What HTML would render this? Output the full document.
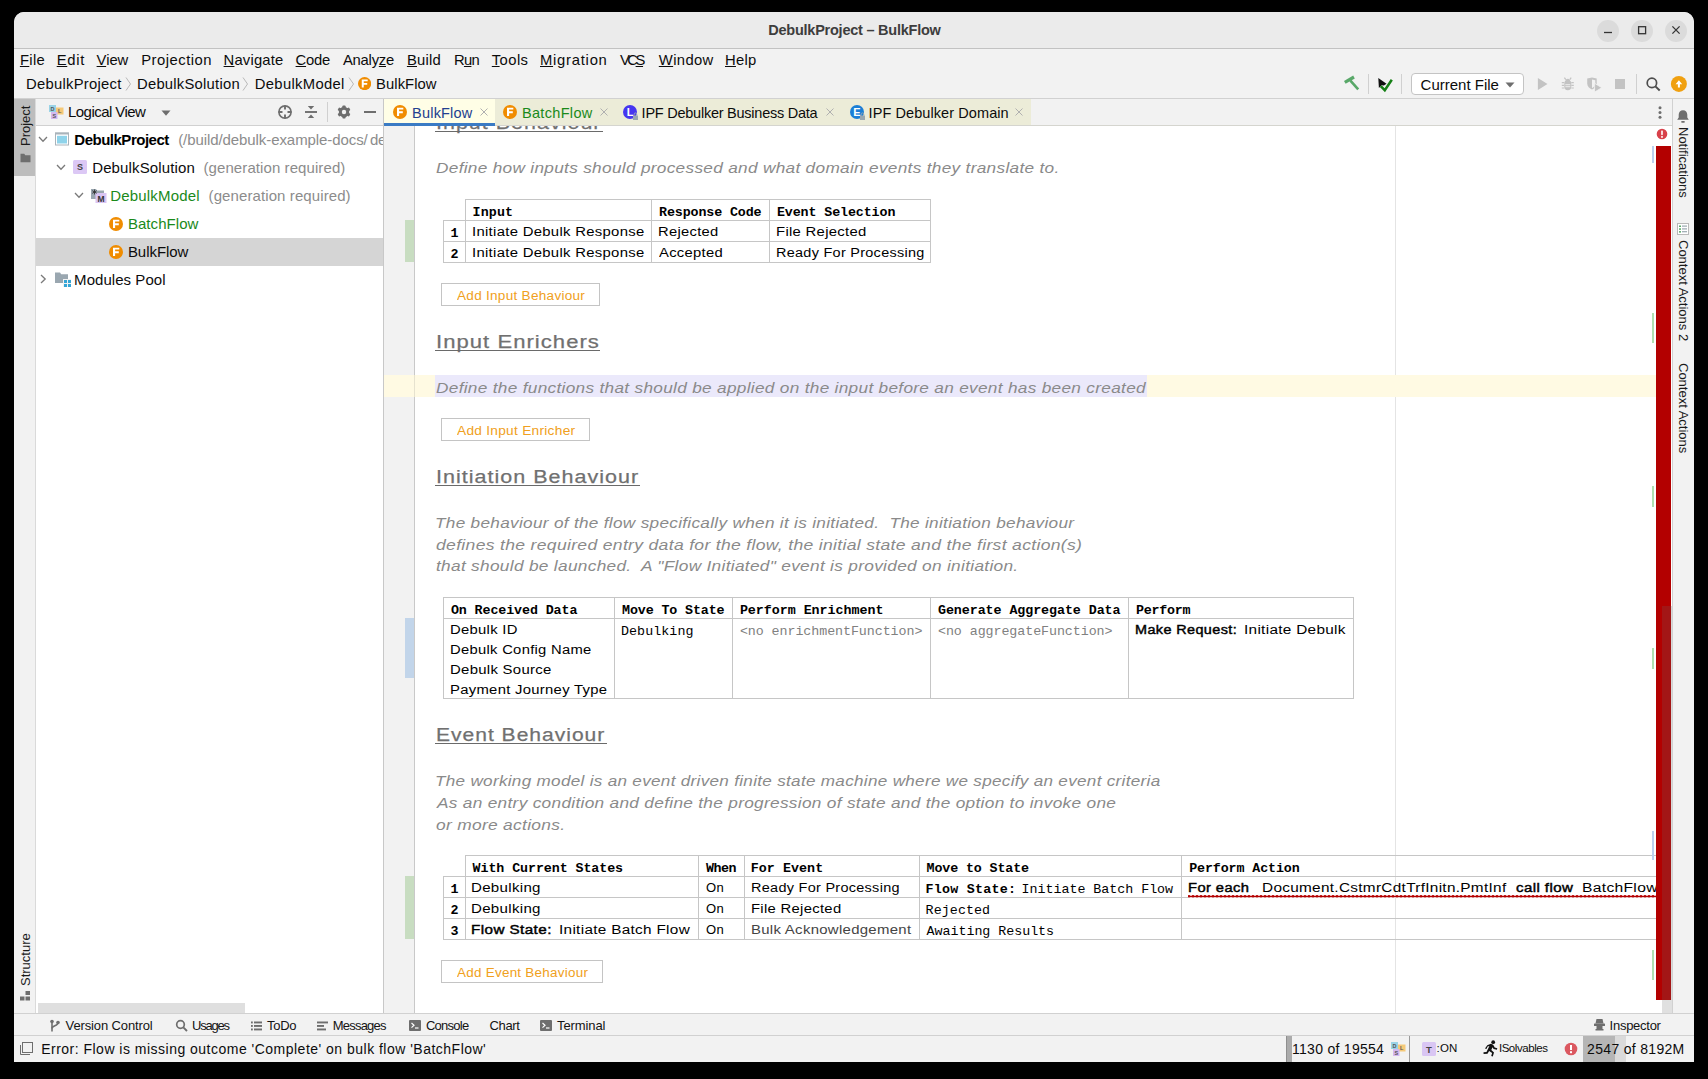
<!DOCTYPE html>
<html><head><meta charset="utf-8"><title>DebulkProject - BulkFlow</title>
<style>
html,body{margin:0;padding:0;background:#000;}
body{width:1708px;height:1079px;position:relative;overflow:hidden;font-family:"Liberation Sans",sans-serif;}
div,span.t,svg{position:absolute;}
span.t{white-space:pre;display:block;}
u{text-decoration:underline;text-underline-offset:1px;}
.clip{overflow:hidden;}
</style></head><body>
<div style="left:14px;top:12px;width:1680px;height:1050px;background:#f2f2f2;border-radius:10px 10px 0 0;"></div>
<div style="left:14px;top:12px;width:1680px;height:36px;background:#ebebeb;border-radius:10px 10px 0 0;"></div>
<div style="left:14px;top:48px;width:1680px;height:1px;background:#c2c2c2;"></div>
<span class="t" style="left:768.20px;top:22.85px;font:bold 14.5px/14.5px 'Liberation Sans', sans-serif;letter-spacing:-0.234px;color:#3d3d3d;">DebulkProject – BulkFlow</span>
<div style="left:1597px;top:19.5px;width:22px;height:22px;border-radius:11px;background:#dbdbdb"></div>
<div style="left:1631px;top:19.5px;width:22px;height:22px;border-radius:11px;background:#dbdbdb"></div>
<div style="left:1665px;top:19.5px;width:22px;height:22px;border-radius:11px;background:#dbdbdb"></div>
<svg style="left:1597px;top:19px" width="90" height="24" viewBox="0 0 90 24"><g stroke="#333" stroke-width="1.300" fill="none"><path d="M7 13.500h8"/><rect x="41.600" y="7.700" width="7" height="7"/><path d="M75.400 7.400l7.200 7.200M82.600 7.400l-7.200 7.200"/></g></svg>
<span class="t" style="left:19.90px;top:52.80px;font:14.8px/14.8px 'Liberation Sans', sans-serif;letter-spacing:0.362px;color:#0c0c0c;"><u>F</u>ile</span>
<span class="t" style="left:56.70px;top:52.80px;font:14.8px/14.8px 'Liberation Sans', sans-serif;letter-spacing:0.705px;color:#0c0c0c;"><u>E</u>dit</span>
<span class="t" style="left:96.60px;top:52.80px;font:14.8px/14.8px 'Liberation Sans', sans-serif;letter-spacing:-0.040px;color:#0c0c0c;"><u>V</u>iew</span>
<span class="t" style="left:141.20px;top:52.80px;font:14.8px/14.8px 'Liberation Sans', sans-serif;letter-spacing:0.503px;color:#0c0c0c;">Projection</span>
<span class="t" style="left:223.60px;top:52.80px;font:14.8px/14.8px 'Liberation Sans', sans-serif;letter-spacing:0.176px;color:#0c0c0c;"><u>N</u>avigate</span>
<span class="t" style="left:295.60px;top:52.80px;font:14.8px/14.8px 'Liberation Sans', sans-serif;letter-spacing:-0.215px;color:#0c0c0c;"><u>C</u>ode</span>
<span class="t" style="left:342.90px;top:52.80px;font:14.8px/14.8px 'Liberation Sans', sans-serif;letter-spacing:-0.219px;color:#0c0c0c;">Analy<u>z</u>e</span>
<span class="t" style="left:406.90px;top:52.80px;font:14.8px/14.8px 'Liberation Sans', sans-serif;letter-spacing:0.232px;color:#0c0c0c;"><u>B</u>uild</span>
<span class="t" style="left:454.00px;top:52.80px;font:14.8px/14.8px 'Liberation Sans', sans-serif;letter-spacing:-0.758px;color:#0c0c0c;">R<u>u</u>n</span>
<span class="t" style="left:491.80px;top:52.80px;font:14.8px/14.8px 'Liberation Sans', sans-serif;letter-spacing:0.414px;color:#0c0c0c;"><u>T</u>ools</span>
<span class="t" style="left:540.00px;top:52.80px;font:14.8px/14.8px 'Liberation Sans', sans-serif;letter-spacing:0.747px;color:#0c0c0c;"><u>M</u>igration</span>
<span class="t" style="left:619.90px;top:52.80px;font:14.8px/14.8px 'Liberation Sans', sans-serif;letter-spacing:-2.428px;color:#0c0c0c;">VC<u>S</u></span>
<span class="t" style="left:658.80px;top:52.80px;font:14.8px/14.8px 'Liberation Sans', sans-serif;letter-spacing:0.372px;color:#0c0c0c;"><u>W</u>indow</span>
<span class="t" style="left:725.00px;top:52.80px;font:14.8px/14.8px 'Liberation Sans', sans-serif;letter-spacing:0.266px;color:#0c0c0c;"><u>H</u>elp</span>
<span class="t" style="left:26.00px;top:76.80px;font:14.8px/14.8px 'Liberation Sans', sans-serif;letter-spacing:0.267px;color:#0c0c0c;">DebulkProject</span>
<span class="t" style="left:137.00px;top:76.80px;font:14.8px/14.8px 'Liberation Sans', sans-serif;letter-spacing:0.238px;color:#0c0c0c;">DebulkSolution</span>
<span class="t" style="left:254.80px;top:76.80px;font:14.8px/14.8px 'Liberation Sans', sans-serif;letter-spacing:0.323px;color:#0c0c0c;">DebulkModel</span>
<span class="t" style="left:376.10px;top:76.80px;font:14.8px/14.8px 'Liberation Sans', sans-serif;letter-spacing:0.051px;color:#0c0c0c;">BulkFlow</span>
<svg style="left:124.6px;top:76px" width="7" height="16" viewBox="0 0 7 16"><path d="M1 1.500l4.500 6.500l-4.500 6.500" stroke="#b9b9b9" stroke-width="1" fill="none"/></svg>
<svg style="left:242px;top:76px" width="7" height="16" viewBox="0 0 7 16"><path d="M1 1.500l4.500 6.500l-4.500 6.500" stroke="#b9b9b9" stroke-width="1" fill="none"/></svg>
<svg style="left:347.5px;top:76px" width="7" height="16" viewBox="0 0 7 16"><path d="M1 1.500l4.500 6.500l-4.500 6.500" stroke="#b9b9b9" stroke-width="1" fill="none"/></svg>
<svg style="left:358.2px;top:77.0px" width="13.2" height="13.2" viewBox="0 0 14 14"><circle cx="7" cy="7" r="7" fill="#f08c00"/><path d="M4 2.700h6.300v1.900H6.100v1.700h3.700v1.900H6.100v2.900H4z" fill="#fff"/></svg>
<div style="left:14px;top:98px;width:1680px;height:1px;background:#d1d1d1;"></div>
<svg style="left:1340px;top:72px" width="24" height="24" viewBox="0 0 24 24"><g stroke="#59a869" fill="none"><path d="M4.800 10.400L14 5" stroke-width="3.200"/><path d="M10.400 8.600L18.200 17.400" stroke-width="2.600"/></g></svg>
<div style="left:1368px;top:74px;width:1px;height:20px;background:#d0d0d0;"></div>
<svg style="left:1374px;top:72px" width="24" height="24" viewBox="0 0 24 24"><path d="M4.300 6l0.600 9.900l2.600-2.600l2.400 0.200l2.600-1.700z" fill="#111"/><path d="M6.700 14.100l4.100 4.100l7-10.500" stroke="#168016" stroke-width="2.500" fill="none"/></svg>
<div style="left:1401px;top:74px;width:1px;height:20px;background:#d0d0d0;"></div>
<div style="left:1411px;top:73px;width:111px;height:20px;background:#fff;border:1px solid #c4c4c4;border-radius:4px"></div>
<span class="t" style="left:1420.60px;top:76.70px;font:15px/15px 'Liberation Sans', sans-serif;letter-spacing:-0.001px;color:#0c0c0c;">Current File</span>
<svg style="left:1505px;top:81.500px" width="10" height="6" viewBox="0 0 10 6"><path d="M0.500 0.500h9L5 5.500z" fill="#6e6e6e"/></svg>
<svg style="left:1534px;top:74px" width="20" height="20" viewBox="0 0 20 20"><path d="M3.900 4l9.600 6l-9.600 6z" fill="#c3c3c3"/></svg>
<svg style="left:1558px;top:74px" width="20" height="20" viewBox="0 0 20 20"><g fill="#c3c3c3"><path d="M6.300 9.500a3.500 3.500 0 0 1 7 0v3a3.500 3.800 0 0 1 -7 0z"/><circle cx="9.800" cy="7" r="2.300"/></g><g stroke="#c3c3c3" stroke-width="1.200" fill="none"><path d="M7.800 5.600L6.400 3.600M11.800 5.600L13.200 3.600M3.800 8.600h2.500M13.300 8.600h2.500M3.800 11.300h2.500M13.300 11.300h2.500M3.800 14h2.500M13.300 14h2.500"/></g><g stroke="#f2f2f2" stroke-width="0.900"><path d="M7.300 10.700h5M7.300 12.700h5"/></g></svg>
<svg style="left:1584px;top:74px" width="20" height="20" viewBox="0 0 20 20"><g fill="#c3c3c3"><path d="M3.200 4.600l4.800-1.200l4.700 1.200v4.900c0 3-2.300 5-4.700 6c-2.500-1-4.800-3-4.800-6z"/></g><path d="M8 5.500v8.700c2-1 3.300-2.500 3.300-4.700V6.300z" fill="#f2f2f2"/><path d="M10.600 9.300l7.200 4.400l-7.200 4.400z" fill="#c3c3c3" stroke="#f2f2f2" stroke-width="0.800"/></svg>
<div style="left:1615px;top:79px;width:10px;height:10px;background:#c3c3c3;"></div>
<div style="left:1636px;top:74px;width:1px;height:20px;background:#d0d0d0;"></div>
<svg style="left:1643px;top:74px" width="20" height="20" viewBox="0 0 20 20"><circle cx="8.900" cy="8.900" r="4.700" stroke="#4d4d4d" stroke-width="1.700" fill="none"/><path d="M12.400 12.400l4.300 4.100" stroke="#4d4d4d" stroke-width="2"/></svg>
<svg style="left:1669px;top:74px" width="20" height="20" viewBox="0 0 20 20"><circle cx="9.900" cy="9.900" r="8" fill="#f0a010"/><path d="M9.900 6.200l3.300 4.100H10.900v3.200H8.900v-3.200H6.600z" fill="#fff"/></svg>
<div style="left:35px;top:99px;width:1px;height:914px;background:#dadada;"></div>
<div style="left:14px;top:99px;width:21px;height:77px;background:#bdbdbd;"></div>
<span class="t" style="left:14px;top:99px;width:22px;height:77px;"></span>
<span class="t" style="left:18.5px;top:146px;transform-origin:0 0;transform:rotate(-90deg);font:13px/13px 'Liberation Sans',sans-serif;letter-spacing:0px;color:#1a1a1a">Project</span>
<svg style="left:19.500px;top:153px" width="11" height="10" viewBox="0 0 13 12"><path d="M0.500 1h4.500l1.200 1.800H12.500V11H0.500z" fill="#6e6e6e"/></svg>
<span class="t" style="left:18.5px;top:986px;transform-origin:0 0;transform:rotate(-90deg);font:13px/13px 'Liberation Sans',sans-serif;letter-spacing:0px;color:#1a1a1a">Structure</span>
<svg style="left:20px;top:991px" width="11" height="10" viewBox="0 0 11 10"><g fill="#6e6e6e"><rect x="5.500" y="0" width="4.500" height="4"/><rect x="0" y="5.500" width="4.500" height="4"/><rect x="5.500" y="5.500" width="4.500" height="4"/></g></svg>
<div style="left:36px;top:126px;width:347px;height:887px;background:#fff;"></div>
<div style="left:36px;top:125px;width:347px;height:1px;background:#d1d1d1;"></div>
<div style="left:383px;top:99px;width:1px;height:914px;background:#c8c8c8;"></div>
<svg style="left:49px;top:105px" width="15" height="14" viewBox="0 0 15 14"><rect x="0" y="0" width="7" height="7" fill="#9ad3e6"/><rect x="7" y="2.500" width="7.500" height="7" fill="#f5c978"/><rect x="2" y="7" width="6.500" height="7" fill="#d3b8ef"/><g font-family="Liberation Sans" font-size="5.500" font-weight="bold" fill="#555"><text x="1.600" y="5.500">D</text><text x="9" y="8.200">L</text><text x="3.500" y="12.700">S</text></g></svg>
<span class="t" style="left:68.00px;top:103.90px;font:15px/15px 'Liberation Sans', sans-serif;letter-spacing:-0.546px;color:#0c0c0c;">Logical View</span>
<svg style="left:161px;top:110px" width="10" height="6" viewBox="0 0 10 6"><path d="M0.500 0.500h9L5 5.800z" fill="#6e6e6e"/></svg>
<svg style="left:277px;top:104px" width="16" height="16" viewBox="0 0 16 16"><circle cx="8" cy="8" r="6.100" stroke="#6e6e6e" stroke-width="1.600" fill="none"/><path d="M8 1.500v4M8 10.500v4M1.500 8h4M10.500 8h4" stroke="#6e6e6e" stroke-width="1.900"/></svg>
<svg style="left:303px;top:104px" width="16" height="16" viewBox="0 0 16 16"><path d="M2 8h12" stroke="#6e6e6e" stroke-width="1.900"/><path d="M4.800 2h6.400L8 5.500zM4.800 14h6.400L8 10.500z" fill="#6e6e6e"/></svg>
<div style="left:327px;top:102px;width:1px;height:20px;background:#d0d0d0;"></div>
<svg style="left:336px;top:104px" width="16" height="16" viewBox="0 0 16 16"><g fill="#6e6e6e"><circle cx="8" cy="8" r="5.200"/><rect x="6.400" y="1.400" width="3.200" height="13.200" rx="0.800"/><rect x="6.400" y="1.400" width="3.200" height="13.200" rx="0.800" transform="rotate(60 8 8)"/><rect x="6.400" y="1.400" width="3.200" height="13.200" rx="0.800" transform="rotate(120 8 8)"/></g><circle cx="8" cy="8" r="2.200" fill="#f2f2f2"/></svg>
<div style="left:364px;top:111px;width:12px;height:2px;background:#6e6e6e;"></div>
<div style="left:36px;top:238px;width:347px;height:28px;background:#d5d5d5;"></div>
<svg style="left:38.4px;top:136.3px" width="10" height="7" viewBox="0 0 10 7"><path d="M1 1l4 4.200L9 1" stroke="#7a7a7a" stroke-width="1.300" fill="none"/></svg>
<svg style="left:55px;top:132px" width="14" height="14" viewBox="0 0 14 14"><rect x="0" y="0.300" width="14" height="13.200" fill="#a9b3ba"/><rect x="1" y="2.500" width="12" height="10" fill="#fff"/><rect x="2" y="3.800" width="10" height="7.700" fill="#8fd3ea"/></svg>
<span class="t" style="left:74.30px;top:131.70px;font:bold 15px/15px 'Liberation Sans', sans-serif;letter-spacing:-0.489px;color:#000;">DebulkProject</span>
<span class="t" style="left:178.20px;top:131.70px;font:15px/15px 'Liberation Sans', sans-serif;letter-spacing:-0.081px;color:#8c8c8c;">(/build/debulk-example-docs/</span>
<span class="t" style="left:369.90px;top:131.70px;font:15px/15px 'Liberation Sans', sans-serif;letter-spacing:-0.200px;color:#8c8c8c;">debulk</span>
<svg style="left:56.3px;top:164.3px" width="10" height="7" viewBox="0 0 10 7"><path d="M1 1l4 4.200L9 1" stroke="#7a7a7a" stroke-width="1.300" fill="none"/></svg>
<svg style="left:73px;top:160px" width="14" height="14" viewBox="0 0 14 14"><rect width="14" height="14" rx="1.500" fill="#dcc8f5"/><text x="7" y="10.300" text-anchor="middle" font-family="Liberation Sans" font-size="9" font-weight="bold" fill="#444">S</text></svg>
<span class="t" style="left:92.20px;top:159.70px;font:15px/15px 'Liberation Sans', sans-serif;letter-spacing:0.126px;color:#0c0c0c;">DebulkSolution</span>
<span class="t" style="left:203.50px;top:159.70px;font:15px/15px 'Liberation Sans', sans-serif;letter-spacing:0.086px;color:#8c8c8c;">(generation required)</span>
<svg style="left:74.3px;top:192.3px" width="10" height="7" viewBox="0 0 10 7"><path d="M1 1l4 4.200L9 1" stroke="#7a7a7a" stroke-width="1.300" fill="none"/></svg>
<svg style="left:91px;top:188px" width="16" height="15" viewBox="0 0 16 15"><path d="M0 1h5l1 1.500H13V11H0z" fill="#9aa7b0"/><rect x="4.500" y="5" width="11" height="10" fill="#d9c4f3"/><text x="10" y="13.500" text-anchor="middle" font-family="Liberation Sans" font-size="8.500" font-weight="bold" fill="#333">M</text><path d="M3.500 1.500v5M1.300 2.700l4.400 2.600M5.700 2.700L1.300 5.300" stroke="#333" stroke-width="0.900"/></svg>
<span class="t" style="left:110.30px;top:187.70px;font:15px/15px 'Liberation Sans', sans-serif;letter-spacing:0.169px;color:#1a8a1a;">DebulkModel</span>
<span class="t" style="left:208.60px;top:187.70px;font:15px/15px 'Liberation Sans', sans-serif;letter-spacing:0.096px;color:#8c8c8c;">(generation required)</span>
<svg style="left:109px;top:216.5px" width="14" height="14" viewBox="0 0 14 14"><circle cx="7" cy="7" r="7" fill="#f08c00"/><path d="M4 2.700h6.300v1.900H6.100v1.700h3.700v1.900H6.100v2.900H4z" fill="#fff"/></svg>
<span class="t" style="left:127.90px;top:215.70px;font:15px/15px 'Liberation Sans', sans-serif;letter-spacing:0.063px;color:#1a8a1a;">BatchFlow</span>
<svg style="left:109px;top:244.5px" width="14" height="14" viewBox="0 0 14 14"><circle cx="7" cy="7" r="7" fill="#f08c00"/><path d="M4 2.700h6.300v1.900H6.100v1.700h3.700v1.900H6.100v2.900H4z" fill="#fff"/></svg>
<span class="t" style="left:127.90px;top:243.70px;font:15px/15px 'Liberation Sans', sans-serif;letter-spacing:-0.045px;color:#0c0c0c;">BulkFlow</span>
<svg style="left:39.8px;top:274px" width="7" height="10" viewBox="0 0 7 10"><path d="M1 1l4.200 4L1 9" stroke="#7a7a7a" stroke-width="1.300" fill="none"/></svg>
<svg style="left:55px;top:272px" width="16" height="15" viewBox="0 0 16 15"><path d="M0 0.500h5l1.200 1.800H13V11H0z" fill="#9aa7b0"/><rect x="8" y="7" width="8" height="8" fill="#f2f2f2"/><g fill="#35a5d6"><rect x="9" y="8" width="3" height="3"/><rect x="13" y="8" width="3" height="3"/><rect x="9" y="12" width="3" height="3"/><rect x="13" y="12" width="3" height="3"/></g></svg>
<span class="t" style="left:74.10px;top:271.70px;font:15px/15px 'Liberation Sans', sans-serif;letter-spacing:0.050px;color:#0c0c0c;">Modules Pool</span>
<div style="left:38px;top:1003px;width:207px;height:10px;background:#dfdfdf;"></div>
<div style="left:383px;top:99px;width:1px;height:914px;background:#c8c8c8;"></div>
<div style="left:384px;top:126px;width:1288px;height:887px;background:#fff;"></div>
<div style="left:384px;top:126px;width:30px;height:887px;background:#f2f2f2;"></div>
<div style="left:414px;top:126px;width:1px;height:887px;background:#c9c9c9;"></div>
<div style="left:1395px;top:126px;width:1px;height:887px;background:#e4e4e4;"></div>
<div style="left:384px;top:375px;width:1272px;height:22px;background:#fffae3;"></div>
<div style="left:414px;top:375px;width:1px;height:22px;background:#e6e2cf;"></div>
<div style="left:435px;top:375px;width:712px;height:22px;background:#ebe9fb;"></div>
<div style="left:405px;top:220px;width:9px;height:42px;background:#c8ddc1;"></div>
<div style="left:405px;top:618px;width:9px;height:60px;background:#c2d5ea;"></div>
<div style="left:405px;top:876px;width:9px;height:63px;background:#c8ddc1;"></div>
<span class="t" style="left:435.78px;top:113.15px;font:19.1px/19.1px 'Liberation Sans', sans-serif;letter-spacing:0.900px;color:#707070;-webkit-text-stroke:0.250px #707070;transform-origin:0 0;transform:scaleX(1.1240);">Input Behaviour</span>
<div style="left:435px;top:131px;width:168px;height:1px;background:#6a6a6a;"></div>
<span class="t" style="left:436.10px;top:161.10px;font:italic 14.2px/14.2px 'Liberation Sans', sans-serif;letter-spacing:0.250px;color:#8a8a8a;transform-origin:0 0;transform:scaleX(1.2143);">Define how inputs should processed and what domain events they translate to.</span>
<div style="left:465px;top:199px;width:466px;height:1px;background:#c6c6c6;"></div>
<div style="left:443px;top:220px;width:488px;height:1px;background:#c6c6c6;"></div>
<div style="left:443px;top:241px;width:488px;height:1px;background:#c6c6c6;"></div>
<div style="left:443px;top:262px;width:488px;height:1px;background:#c6c6c6;"></div>
<div style="left:443px;top:220px;width:1px;height:43px;background:#c6c6c6;"></div>
<div style="left:465px;top:199px;width:1px;height:64px;background:#c6c6c6;"></div>
<div style="left:651px;top:199px;width:1px;height:64px;background:#c6c6c6;"></div>
<div style="left:769px;top:199px;width:1px;height:64px;background:#c6c6c6;"></div>
<div style="left:930px;top:199px;width:1px;height:64px;background:#c6c6c6;"></div>
<span class="t" style="left:472.50px;top:206.03px;font:bold 13.33px/13.33px 'Liberation Mono', monospace;letter-spacing:0.127px;color:#000;">Input</span>
<span class="t" style="left:659.00px;top:206.03px;font:bold 13.33px/13.33px 'Liberation Mono', monospace;letter-spacing:-0.123px;color:#000;">Response Code</span>
<span class="t" style="left:776.90px;top:206.03px;font:bold 13.33px/13.33px 'Liberation Mono', monospace;letter-spacing:-0.105px;color:#000;">Event Selection</span>
<span class="t" style="left:450.60px;top:227.03px;font:bold 13.33px/13.33px 'Liberation Mono', monospace;letter-spacing:0.000px;color:#000;">1</span>
<span class="t" style="left:450.60px;top:248.03px;font:bold 13.33px/13.33px 'Liberation Mono', monospace;letter-spacing:0.000px;color:#000;">2</span>
<span class="t" style="left:471.61px;top:225.95px;font:12.5px/12.5px 'Liberation Sans', sans-serif;letter-spacing:0.250px;color:#000;transform-origin:0 0;transform:scaleX(1.1901);">Initiate Debulk Response</span>
<span class="t" style="left:657.82px;top:225.95px;font:12.5px/12.5px 'Liberation Sans', sans-serif;letter-spacing:0.250px;color:#000;transform-origin:0 0;transform:scaleX(1.1789);">Rejected</span>
<span class="t" style="left:775.71px;top:225.95px;font:12.5px/12.5px 'Liberation Sans', sans-serif;letter-spacing:0.250px;color:#000;transform-origin:0 0;transform:scaleX(1.1894);">File Rejected</span>
<span class="t" style="left:471.61px;top:246.95px;font:12.5px/12.5px 'Liberation Sans', sans-serif;letter-spacing:0.250px;color:#000;transform-origin:0 0;transform:scaleX(1.1901);">Initiate Debulk Response</span>
<span class="t" style="left:659.00px;top:246.95px;font:12.5px/12.5px 'Liberation Sans', sans-serif;letter-spacing:0.250px;color:#000;transform-origin:0 0;transform:scaleX(1.1833);">Accepted</span>
<span class="t" style="left:775.75px;top:246.95px;font:12.5px/12.5px 'Liberation Sans', sans-serif;letter-spacing:0.250px;color:#000;transform-origin:0 0;transform:scaleX(1.1549);">Ready For Processing</span>
<div style="left:441px;top:283px;width:157px;height:21px;border:1px solid #c4c4c4;background:#fff"></div>
<span class="t" style="left:456.80px;top:289.75px;font:12.5px/12.5px 'Liberation Sans', sans-serif;letter-spacing:0.250px;color:#f0a020;transform-origin:0 0;transform:scaleX(1.0858);">Add Input Behaviour</span>
<span class="t" style="left:435.74px;top:332.15px;font:19.1px/19.1px 'Liberation Sans', sans-serif;letter-spacing:0.900px;color:#707070;-webkit-text-stroke:0.250px #707070;transform-origin:0 0;transform:scaleX(1.1551);">Input Enrichers</span>
<div style="left:435px;top:350px;width:165px;height:1px;background:#6a6a6a;"></div>
<span class="t" style="left:436.10px;top:381.10px;font:italic 14.2px/14.2px 'Liberation Sans', sans-serif;letter-spacing:0.250px;color:#8a8a8a;transform-origin:0 0;transform:scaleX(1.2143);">Define the functions that should be applied on the input before an event has been created</span>
<div style="left:441px;top:418px;width:147px;height:21px;border:1px solid #c4c4c4;background:#fff"></div>
<span class="t" style="left:456.60px;top:424.55px;font:12.5px/12.5px 'Liberation Sans', sans-serif;letter-spacing:0.250px;color:#f0a020;transform-origin:0 0;transform:scaleX(1.0955);">Add Input Enricher</span>
<span class="t" style="left:435.77px;top:467.15px;font:19.1px/19.1px 'Liberation Sans', sans-serif;letter-spacing:0.900px;color:#707070;-webkit-text-stroke:0.250px #707070;transform-origin:0 0;transform:scaleX(1.1265);">Initiation Behaviour</span>
<div style="left:435px;top:485px;width:205px;height:1px;background:#6a6a6a;"></div>
<span class="t" style="left:434.89px;top:516.10px;font:italic 14.2px/14.2px 'Liberation Sans', sans-serif;letter-spacing:0.250px;color:#8a8a8a;transform-origin:0 0;transform:scaleX(1.2114);">The behaviour of the flow specifically when it is initiated.  The initiation behaviour</span>
<span class="t" style="left:436.10px;top:538.10px;font:italic 14.2px/14.2px 'Liberation Sans', sans-serif;letter-spacing:0.250px;color:#8a8a8a;transform-origin:0 0;transform:scaleX(1.2386);">defines the required entry data for the flow, the initial state and the first action(s)</span>
<span class="t" style="left:436.10px;top:559.10px;font:italic 14.2px/14.2px 'Liberation Sans', sans-serif;letter-spacing:0.250px;color:#8a8a8a;transform-origin:0 0;transform:scaleX(1.2170);">that should be launched.  A "Flow Initiated" event is provided on initiation.</span>
<div style="left:443px;top:597px;width:911px;height:1px;background:#c6c6c6;"></div>
<div style="left:443px;top:618px;width:911px;height:1px;background:#c6c6c6;"></div>
<div style="left:443px;top:698px;width:911px;height:1px;background:#c6c6c6;"></div>
<div style="left:443px;top:597px;width:1px;height:102px;background:#c6c6c6;"></div>
<div style="left:614px;top:597px;width:1px;height:102px;background:#c6c6c6;"></div>
<div style="left:732px;top:597px;width:1px;height:102px;background:#c6c6c6;"></div>
<div style="left:930px;top:597px;width:1px;height:102px;background:#c6c6c6;"></div>
<div style="left:1128px;top:597px;width:1px;height:102px;background:#c6c6c6;"></div>
<div style="left:1353px;top:597px;width:1px;height:102px;background:#c6c6c6;"></div>
<span class="t" style="left:450.90px;top:604.04px;font:bold 13.33px/13.33px 'Liberation Mono', monospace;letter-spacing:-0.098px;color:#000;">On Received Data</span>
<span class="t" style="left:622.00px;top:604.04px;font:bold 13.33px/13.33px 'Liberation Mono', monospace;letter-spacing:-0.123px;color:#000;">Move To State</span>
<span class="t" style="left:739.90px;top:604.04px;font:bold 13.33px/13.33px 'Liberation Mono', monospace;letter-spacing:-0.028px;color:#000;">Perform Enrichment</span>
<span class="t" style="left:938.00px;top:604.04px;font:bold 13.33px/13.33px 'Liberation Mono', monospace;letter-spacing:-0.066px;color:#000;">Generate Aggregate Data</span>
<span class="t" style="left:1135.90px;top:604.04px;font:bold 13.33px/13.33px 'Liberation Mono', monospace;letter-spacing:-0.248px;color:#000;">Perform</span>
<span class="t" style="left:449.71px;top:623.95px;font:12.5px/12.5px 'Liberation Sans', sans-serif;letter-spacing:0.250px;color:#000;transform-origin:0 0;transform:scaleX(1.1852);">Debulk ID</span>
<span class="t" style="left:449.72px;top:643.95px;font:12.5px/12.5px 'Liberation Sans', sans-serif;letter-spacing:0.250px;color:#000;transform-origin:0 0;transform:scaleX(1.1818);">Debulk Config Name</span>
<span class="t" style="left:449.71px;top:663.95px;font:12.5px/12.5px 'Liberation Sans', sans-serif;letter-spacing:0.250px;color:#000;transform-origin:0 0;transform:scaleX(1.1923);">Debulk Source</span>
<span class="t" style="left:449.71px;top:683.95px;font:12.5px/12.5px 'Liberation Sans', sans-serif;letter-spacing:0.250px;color:#000;transform-origin:0 0;transform:scaleX(1.1865);">Payment Journey Type</span>
<span class="t" style="left:621.00px;top:625.04px;font:13.33px/13.33px 'Liberation Mono', monospace;letter-spacing:0.064px;color:#000;">Debulking</span>
<span class="t" style="left:739.90px;top:625.04px;font:13.33px/13.33px 'Liberation Mono', monospace;letter-spacing:-0.066px;color:#808080;">&lt;no enrichmentFunction&gt;</span>
<span class="t" style="left:938.00px;top:625.04px;font:13.33px/13.33px 'Liberation Mono', monospace;letter-spacing:-0.070px;color:#808080;">&lt;no aggregateFunction&gt;</span>
<span class="t" style="left:1135.15px;top:623.95px;font:12.5px/12.5px 'Liberation Sans', sans-serif;letter-spacing:0.350px;color:#000;-webkit-text-stroke:0.420px #000;transform-origin:0 0;transform:scaleX(1.1521);">Make Request:</span>
<span class="t" style="left:1243.67px;top:623.95px;font:12.5px/12.5px 'Liberation Sans', sans-serif;letter-spacing:0.250px;color:#000;transform-origin:0 0;transform:scaleX(1.2272);">Initiate Debulk</span>
<span class="t" style="left:435.80px;top:725.15px;font:19.1px/19.1px 'Liberation Sans', sans-serif;letter-spacing:0.900px;color:#707070;-webkit-text-stroke:0.250px #707070;transform-origin:0 0;transform:scaleX(1.1021);">Event Behaviour</span>
<div style="left:435px;top:743px;width:172px;height:1px;background:#6a6a6a;"></div>
<span class="t" style="left:434.89px;top:774.10px;font:italic 14.2px/14.2px 'Liberation Sans', sans-serif;letter-spacing:0.250px;color:#8a8a8a;transform-origin:0 0;transform:scaleX(1.2055);">The working model is an event driven finite state machine where we specify an event criteria</span>
<span class="t" style="left:437.32px;top:796.10px;font:italic 14.2px/14.2px 'Liberation Sans', sans-serif;letter-spacing:0.250px;color:#8a8a8a;transform-origin:0 0;transform:scaleX(1.2158);">As an entry condition and define the progression of state and the option to invoke one</span>
<span class="t" style="left:436.10px;top:818.10px;font:italic 14.2px/14.2px 'Liberation Sans', sans-serif;letter-spacing:0.250px;color:#8a8a8a;transform-origin:0 0;transform:scaleX(1.2236);">or more actions.</span>
<div style="left:465px;top:855px;width:1192px;height:1px;background:#c6c6c6;"></div>
<div style="left:443px;top:876px;width:1214px;height:1px;background:#c6c6c6;"></div>
<div style="left:443px;top:897px;width:1214px;height:1px;background:#c6c6c6;"></div>
<div style="left:443px;top:918px;width:1214px;height:1px;background:#c6c6c6;"></div>
<div style="left:443px;top:939px;width:1214px;height:1px;background:#c6c6c6;"></div>
<div style="left:443px;top:876px;width:1px;height:64px;background:#c6c6c6;"></div>
<div style="left:465px;top:855px;width:1px;height:85px;background:#c6c6c6;"></div>
<div style="left:698px;top:855px;width:1px;height:85px;background:#c6c6c6;"></div>
<div style="left:744px;top:855px;width:1px;height:85px;background:#c6c6c6;"></div>
<div style="left:919px;top:855px;width:1px;height:85px;background:#c6c6c6;"></div>
<div style="left:1181px;top:855px;width:1px;height:85px;background:#c6c6c6;"></div>
<div style="left:1656px;top:855px;width:1px;height:85px;background:#c6c6c6;"></div>
<span class="t" style="left:472.60px;top:862.04px;font:bold 13.33px/13.33px 'Liberation Mono', monospace;letter-spacing:-0.082px;color:#000;">With Current States</span>
<span class="t" style="left:705.90px;top:862.04px;font:bold 13.33px/13.33px 'Liberation Mono', monospace;letter-spacing:-0.498px;color:#000;">When</span>
<span class="t" style="left:750.70px;top:862.04px;font:bold 13.33px/13.33px 'Liberation Mono', monospace;letter-spacing:0.064px;color:#000;">For Event</span>
<span class="t" style="left:926.60px;top:862.04px;font:bold 13.33px/13.33px 'Liberation Mono', monospace;letter-spacing:-0.123px;color:#000;">Move to State</span>
<span class="t" style="left:1189.20px;top:862.04px;font:bold 13.33px/13.33px 'Liberation Mono', monospace;letter-spacing:-0.114px;color:#000;">Perform Action</span>
<span class="t" style="left:450.60px;top:883.04px;font:bold 13.33px/13.33px 'Liberation Mono', monospace;letter-spacing:0.000px;color:#000;">1</span>
<span class="t" style="left:450.60px;top:904.04px;font:bold 13.33px/13.33px 'Liberation Mono', monospace;letter-spacing:0.000px;color:#000;">2</span>
<span class="t" style="left:450.60px;top:925.04px;font:bold 13.33px/13.33px 'Liberation Mono', monospace;letter-spacing:0.000px;color:#000;">3</span>
<span class="t" style="left:471.39px;top:881.95px;font:12.5px/12.5px 'Liberation Sans', sans-serif;letter-spacing:0.250px;color:#000;transform-origin:0 0;transform:scaleX(1.2059);">Debulking</span>
<span class="t" style="left:705.90px;top:881.95px;font:12.5px/12.5px 'Liberation Sans', sans-serif;letter-spacing:0.250px;color:#000;transform-origin:0 0;transform:scaleX(1.0428);">On</span>
<span class="t" style="left:750.54px;top:881.95px;font:12.5px/12.5px 'Liberation Sans', sans-serif;letter-spacing:0.250px;color:#000;transform-origin:0 0;transform:scaleX(1.1564);">Ready For Processing</span>
<span class="t" style="left:925.60px;top:883.04px;font:bold 13.33px/13.33px 'Liberation Mono', monospace;letter-spacing:0.252px;color:#000;">Flow State:</span>
<span class="t" style="left:1021.60px;top:883.04px;font:13.33px/13.33px 'Liberation Mono', monospace;letter-spacing:-0.026px;color:#000;">Initiate Batch Flow</span>
<span class="t" style="left:1187.72px;top:881.95px;font:12.5px/12.5px 'Liberation Sans', sans-serif;letter-spacing:0.350px;color:#000;-webkit-text-stroke:0.420px #000;transform-origin:0 0;transform:scaleX(1.1765);">For each</span>
<span class="t" style="left:1262.17px;top:881.95px;font:12.5px/12.5px 'Liberation Sans', sans-serif;letter-spacing:0.250px;color:#000;transform-origin:0 0;transform:scaleX(1.2271);">Document.CstmrCdtTrfInitn.PmtInf</span>
<span class="t" style="left:1515.70px;top:881.95px;font:12.5px/12.5px 'Liberation Sans', sans-serif;letter-spacing:0.350px;color:#000;-webkit-text-stroke:0.420px #000;transform-origin:0 0;transform:scaleX(1.2025);">call flow</span>
<span class="t" style="left:1581.95px;top:881.95px;font:12.5px/12.5px 'Liberation Sans', sans-serif;letter-spacing:0.250px;color:#000;transform-origin:0 0;transform:scaleX(1.2498);">BatchFlow</span>
<div style="left:1188px;top:896px;width:468px;height:1px;background:#b40000;"></div>
<div style="left:1188px;top:895px;width:468px;height:1px;background:repeating-linear-gradient(90deg,#c02020 0 2px,rgba(200,40,40,0.350) 2px 4px)"></div>
<div style="left:1188px;top:897px;width:468px;height:1px;background:repeating-linear-gradient(90deg,#d68a8a 0 2px,#e9c9c9 2px 4px)"></div>
<span class="t" style="left:471.39px;top:902.95px;font:12.5px/12.5px 'Liberation Sans', sans-serif;letter-spacing:0.250px;color:#000;transform-origin:0 0;transform:scaleX(1.2059);">Debulking</span>
<span class="t" style="left:705.90px;top:902.95px;font:12.5px/12.5px 'Liberation Sans', sans-serif;letter-spacing:0.250px;color:#000;transform-origin:0 0;transform:scaleX(1.0428);">On</span>
<span class="t" style="left:750.51px;top:902.95px;font:12.5px/12.5px 'Liberation Sans', sans-serif;letter-spacing:0.250px;color:#000;transform-origin:0 0;transform:scaleX(1.1867);">File Rejected</span>
<span class="t" style="left:925.60px;top:904.04px;font:13.33px/13.33px 'Liberation Mono', monospace;letter-spacing:0.073px;color:#000;">Rejected</span>
<span class="t" style="left:471.08px;top:923.95px;font:12.5px/12.5px 'Liberation Sans', sans-serif;letter-spacing:0.350px;color:#000;-webkit-text-stroke:0.420px #000;transform-origin:0 0;transform:scaleX(1.2176);">Flow State:</span>
<span class="t" style="left:558.67px;top:923.95px;font:12.5px/12.5px 'Liberation Sans', sans-serif;letter-spacing:0.250px;color:#000;transform-origin:0 0;transform:scaleX(1.2260);">Initiate Batch Flow</span>
<span class="t" style="left:705.90px;top:923.95px;font:12.5px/12.5px 'Liberation Sans', sans-serif;letter-spacing:0.250px;color:#000;transform-origin:0 0;transform:scaleX(1.0428);">On</span>
<span class="t" style="left:750.51px;top:923.95px;font:12.5px/12.5px 'Liberation Sans', sans-serif;letter-spacing:0.250px;color:#444;transform-origin:0 0;transform:scaleX(1.1944);">Bulk Acknowledgement</span>
<span class="t" style="left:926.60px;top:925.04px;font:13.33px/13.33px 'Liberation Mono', monospace;letter-spacing:-0.032px;color:#000;">Awaiting Results</span>
<div style="left:441px;top:960px;width:160px;height:21px;border:1px solid #c4c4c4;background:#fff"></div>
<span class="t" style="left:456.60px;top:966.55px;font:12.5px/12.5px 'Liberation Sans', sans-serif;letter-spacing:0.250px;color:#f0a020;transform-origin:0 0;transform:scaleX(1.0741);">Add Event Behaviour</span>
<div style="left:1656px;top:146px;width:15px;height:854px;background:#b30000;"></div>
<div style="left:1662px;top:606px;width:9px;height:394px;background:#a31616;"></div>
<div style="left:1671px;top:606px;width:1px;height:407px;background:#d9d9d9;"></div>
<div style="left:1662px;top:1000px;width:10px;height:13px;background:#e0e0e0;"></div>
<div style="left:1652px;top:146px;width:2px;height:17px;background:#bcd0ee;"></div>
<div style="left:1652px;top:313px;width:2px;height:30px;background:#b0deb0;"></div>
<div style="left:1652px;top:486px;width:2px;height:21px;background:#b0deb0;"></div>
<div style="left:1652px;top:648px;width:2px;height:21px;background:#b0deb0;"></div>
<div style="left:1652px;top:831px;width:2px;height:29px;background:#bcd0ee;"></div>
<div style="left:1652px;top:950px;width:2px;height:30px;background:#b0deb0;"></div>
<svg style="left:1656px;top:128px" width="12" height="12" viewBox="0 0 12 12"><circle cx="6" cy="6" r="5.300" fill="#d8414a"/><rect x="5.200" y="2.600" width="1.600" height="4.300" fill="#fff"/><rect x="5.200" y="7.900" width="1.600" height="1.900" fill="#fff"/></svg>
<div style="left:384px;top:99px;width:1288px;height:27px;background:#f2f2f2;"></div>
<div style="left:384px;top:99px;width:647px;height:27px;background:#ececd8;"></div>
<div style="left:384px;top:99px;width:111px;height:27px;background:#fffee6;"></div>
<div style="left:384px;top:126px;width:1288px;height:0px;background:#d1d1d1;"></div>
<div style="left:384px;top:125px;width:1288px;height:1px;background:#d5d5cf;"></div>
<div style="left:384px;top:123px;width:111px;height:3px;background:#3b7bc4;"></div>
<svg style="left:392.8px;top:105.2px" width="14" height="14" viewBox="0 0 14 14"><circle cx="7" cy="7" r="7" fill="#f08c00"/><path d="M4 2.700h6.300v1.900H6.100v1.700h3.700v1.900H6.100v2.900H4z" fill="#fff"/></svg>
<span class="t" style="left:412.10px;top:105.95px;font:14.5px/14.5px 'Liberation Sans', sans-serif;letter-spacing:0.193px;color:#23408f;">BulkFlow</span>
<svg style="left:479.5px;top:108px" width="8" height="8" viewBox="0 0 8 8"><path d="M0.500 0.500l7 7M7.500 0.500l-7 7" stroke="#b0b0b0" stroke-width="1" fill="none"/></svg>
<svg style="left:502.6px;top:105.2px" width="14" height="14" viewBox="0 0 14 14"><circle cx="7" cy="7" r="7" fill="#f08c00"/><path d="M4 2.700h6.300v1.900H6.100v1.700h3.700v1.900H6.100v2.900H4z" fill="#fff"/></svg>
<span class="t" style="left:521.90px;top:105.95px;font:14.5px/14.5px 'Liberation Sans', sans-serif;letter-spacing:0.335px;color:#1a8a1a;">BatchFlow</span>
<svg style="left:599.5px;top:108px" width="8" height="8" viewBox="0 0 8 8"><path d="M0.500 0.500l7 7M7.500 0.500l-7 7" stroke="#b0b0b0" stroke-width="1" fill="none"/></svg>
<svg style="left:622.8px;top:105.2px" width="16" height="16" viewBox="0 0 16 16"><circle cx="7" cy="7" r="7" fill="#4636f0"/><text x="7" y="10.600" text-anchor="middle" font-family="Liberation Sans" font-size="11" font-weight="bold" fill="#fff">L</text><rect x="10" y="10.500" width="5" height="4.500" fill="#9aa7b0"/><path d="M11.200 10.500v-1.300a1.300 1.300 0 0 1 2.600 0v1.300" stroke="#9aa7b0" stroke-width="0.900" fill="none"/></svg>
<span class="t" style="left:641.60px;top:105.95px;font:14.5px/14.5px 'Liberation Sans', sans-serif;letter-spacing:-0.243px;color:#0c0c0c;">IPF Debulker Business Data</span>
<svg style="left:825.5px;top:108px" width="8" height="8" viewBox="0 0 8 8"><path d="M0.500 0.500l7 7M7.500 0.500l-7 7" stroke="#b0b0b0" stroke-width="1" fill="none"/></svg>
<svg style="left:850px;top:105.2px" width="16" height="16" viewBox="0 0 16 16"><circle cx="7" cy="7" r="7" fill="#1b7fd6"/><text x="7" y="10.600" text-anchor="middle" font-family="Liberation Sans" font-size="11" font-weight="bold" fill="#fff">E</text><rect x="10" y="10.500" width="5" height="4.500" fill="#9aa7b0"/><path d="M11.200 10.500v-1.300a1.300 1.300 0 0 1 2.600 0v1.300" stroke="#9aa7b0" stroke-width="0.900" fill="none"/></svg>
<span class="t" style="left:868.60px;top:105.95px;font:14.5px/14.5px 'Liberation Sans', sans-serif;letter-spacing:0.081px;color:#0c0c0c;">IPF Debulker Domain</span>
<svg style="left:1015px;top:108px" width="8" height="8" viewBox="0 0 8 8"><path d="M0.500 0.500l7 7M7.500 0.500l-7 7" stroke="#b0b0b0" stroke-width="1" fill="none"/></svg>
<svg style="left:1658px;top:106px" width="4" height="13" viewBox="0 0 4 13"><g fill="#6e6e6e"><circle cx="2" cy="1.700" r="1.500"/><circle cx="2" cy="6.500" r="1.500"/><circle cx="2" cy="11.300" r="1.500"/></g></svg>
<div style="left:1672px;top:99px;width:1px;height:914px;background:#d1d1d1;"></div>
<div style="left:1673px;top:99px;width:21px;height:914px;background:#f2f2f2;"></div>
<svg style="left:1676px;top:109px" width="14" height="15" viewBox="0 0 14 15"><path d="M7 1.200c2.600 0 4.300 1.900 4.300 4.600v2.700l1.500 2.300H1.200l1.500-2.300V5.800C2.700 3.100 4.400 1.200 7 1.200z" fill="#6e6e6e"/><rect x="5.200" y="12" width="3.600" height="1.700" rx="0.800" fill="#6e6e6e"/></svg>
<span class="t" style="left:1689.5px;top:127px;transform-origin:0 0;transform:rotate(90deg);font:13px/13px 'Liberation Sans',sans-serif;letter-spacing:0px;color:#1a1a1a">Notifications</span>
<svg style="left:1677px;top:223px" width="12" height="12" viewBox="0 0 12 12"><rect x="0.500" y="0.500" width="11" height="11" fill="#fff" stroke="#b9b9b9"/><g fill="#59a869"><rect x="2" y="2.500" width="2" height="1.500"/><rect x="2" y="5.300" width="2" height="1.500"/><rect x="2" y="8.100" width="2" height="1.500"/></g><g fill="#9aa7b0"><rect x="5" y="2.500" width="5" height="1.200"/><rect x="5" y="5.300" width="5" height="1.200"/><rect x="5" y="8.100" width="5" height="1.200"/></g></svg>
<span class="t" style="left:1689.5px;top:240px;transform-origin:0 0;transform:rotate(90deg);font:13px/13px 'Liberation Sans',sans-serif;letter-spacing:0px;color:#1a1a1a">Context Actions 2</span>
<span class="t" style="left:1689.5px;top:363px;transform-origin:0 0;transform:rotate(90deg);font:13px/13px 'Liberation Sans',sans-serif;letter-spacing:0px;color:#1a1a1a">Context Actions</span>
<div style="left:14px;top:1013px;width:1680px;height:1px;background:#d1d1d1;"></div>
<div style="left:14px;top:1014px;width:1680px;height:21px;background:#f2f2f2;"></div>
<div style="left:14px;top:1035px;width:1680px;height:1px;background:#d1d1d1;"></div>
<svg style="left:49px;top:1019px" width="12" height="14" viewBox="0 0 12 14"><g stroke="#6e6e6e" stroke-width="1.600" fill="none"><path d="M3 1.500v11"/><path d="M9 3.500c0 4-6 2.500-6 6"/></g><circle cx="3" cy="2.500" r="1.800" fill="#6e6e6e"/><circle cx="9" cy="3.500" r="1.800" fill="#6e6e6e"/></svg>
<span class="t" style="left:65.60px;top:1019.20px;font:13px/13px 'Liberation Sans', sans-serif;letter-spacing:-0.128px;color:#141414;">Version Control</span>
<svg style="left:175px;top:1019px" width="13" height="13" viewBox="0 0 13 13"><circle cx="5.500" cy="5.500" r="3.800" stroke="#6e6e6e" stroke-width="1.700" fill="none"/><path d="M8.300 8.300l3.700 3.700" stroke="#6e6e6e" stroke-width="1.900"/></svg>
<span class="t" style="left:192.10px;top:1019.20px;font:13px/13px 'Liberation Sans', sans-serif;letter-spacing:-1.216px;color:#141414;">Usages</span>
<svg style="left:250.500px;top:1020.500px" width="11" height="10" viewBox="0 0 11 10"><g fill="#6e6e6e"><rect x="0" y="0.500" width="1.800" height="1.900"/><rect x="3" y="0.500" width="8" height="1.900"/><rect x="0" y="4" width="1.800" height="1.900"/><rect x="3" y="4" width="8" height="1.900"/><rect x="0" y="7.500" width="1.800" height="1.900"/><rect x="3" y="7.500" width="8" height="1.900"/></g></svg>
<span class="t" style="left:267.10px;top:1019.20px;font:13px/13px 'Liberation Sans', sans-serif;letter-spacing:-0.306px;color:#141414;">ToDo</span>
<svg style="left:317px;top:1020.500px" width="11" height="10" viewBox="0 0 11 10"><g fill="#6e6e6e"><rect x="0" y="0.500" width="11" height="1.900"/><rect x="0" y="4" width="7" height="1.900"/><rect x="0" y="7.500" width="9" height="1.900"/></g></svg>
<span class="t" style="left:332.80px;top:1019.20px;font:13px/13px 'Liberation Sans', sans-serif;letter-spacing:-0.793px;color:#141414;">Messages</span>
<svg style="left:408.5px;top:1019.600px" width="12" height="11" viewBox="0 0 12 11"><rect width="12" height="11" rx="1" fill="#6e6e6e"/><path d="M2.500 3l2.500 2.300L2.500 7.600" stroke="#fff" stroke-width="1.200" fill="none"/><path d="M6 8h3.500" stroke="#fff" stroke-width="1.200"/></svg>
<span class="t" style="left:425.90px;top:1019.20px;font:13px/13px 'Liberation Sans', sans-serif;letter-spacing:-0.728px;color:#141414;">Console</span>
<span class="t" style="left:489.60px;top:1019.20px;font:13px/13px 'Liberation Sans', sans-serif;letter-spacing:-0.369px;color:#141414;">Chart</span>
<svg style="left:539.5px;top:1019.600px" width="12" height="11" viewBox="0 0 12 11"><rect width="12" height="11" rx="1" fill="#6e6e6e"/><path d="M2.500 3l2.500 2.300L2.500 7.600" stroke="#fff" stroke-width="1.200" fill="none"/><path d="M6 8h3.500" stroke="#fff" stroke-width="1.200"/></svg>
<span class="t" style="left:557.00px;top:1019.20px;font:13px/13px 'Liberation Sans', sans-serif;letter-spacing:-0.091px;color:#141414;">Terminal</span>
<svg style="left:1594px;top:1018px" width="11" height="13" viewBox="0 0 11 13"><g fill="#6e6e6e"><path d="M2.500 1h6l1 4.500h-8z"/><rect x="0" y="5.500" width="11" height="2.500" rx="0.600"/><path d="M2.500 8h6v3.500h-6z"/><rect x="1.500" y="11" width="8" height="1.500"/></g></svg>
<span class="t" style="left:1609.60px;top:1019.20px;font:13px/13px 'Liberation Sans', sans-serif;letter-spacing:-0.268px;color:#141414;">Inspector</span>
<div style="left:14px;top:1036px;width:1680px;height:26px;background:#f2f2f2;"></div>
<svg style="left:19px;top:1042px" width="14" height="14" viewBox="0 0 14 14"><g stroke="#6e6e6e" stroke-width="1" fill="none"><rect x="3.500" y="0.500" width="10" height="10"/><path d="M1.500 3v9.500H11"/></g></svg>
<span class="t" style="left:41.20px;top:1042.20px;font:14px/14px 'Liberation Sans', sans-serif;letter-spacing:0.487px;color:#0c0c0c;">Error: Flow is missing outcome 'Complete' on bulk flow 'BatchFlow'</span>
<div style="left:1287px;top:1036px;width:5px;height:26px;background:#ababab;"></div>
<div style="left:1286px;top:1036px;width:1px;height:26px;background:#8f8f8f;"></div>
<span class="t" style="left:1292.00px;top:1042.20px;font:14px/14px 'Liberation Sans', sans-serif;letter-spacing:0.283px;color:#0c0c0c;">1130 of 19554</span>
<svg style="left:1391px;top:1042px" width="15" height="14" viewBox="0 0 15 14"><rect x="0" y="0" width="7" height="7" fill="#9ad3e6"/><rect x="7" y="2.500" width="7.500" height="7" fill="#f5c978"/><rect x="2" y="7" width="6.500" height="7" fill="#d3b8ef"/><g font-family="Liberation Sans" font-size="5.500" font-weight="bold" fill="#555"><text x="1.600" y="5.500">D</text><text x="9" y="8.200">L</text><text x="3.500" y="12.700">S</text></g></svg>
<div style="left:1409px;top:1036px;width:1px;height:26px;background:#9a9a9a;"></div>
<svg style="left:1422px;top:1042px" width="14" height="14" viewBox="0 0 14 14"><rect width="14" height="14" rx="1.500" fill="#d9c6f3"/><text x="7" y="10.500" text-anchor="middle" font-family="Liberation Sans" font-size="9.500" font-weight="bold" fill="#444">T</text></svg>
<span class="t" style="left:1436.60px;top:1043.45px;font:11.5px/11.5px 'Liberation Sans', sans-serif;letter-spacing:0.130px;color:#0c0c0c;">:ON</span>
<svg style="left:1483px;top:1040px" width="16" height="17" viewBox="0 0 16 17"><g fill="#111"><circle cx="10.200" cy="2.200" r="1.900"/><path d="M4.300 5.200l3.600-1.400l2.300 1l1.500 2.800l2.600 0.700l-0.400 1.500l-3.300-0.800l-1.100-1.800l-1.200 2.900l2.700 2.300l-1.200 4.100l-1.600-0.400l0.900-3.100l-3-2.100l-1.600 2.900l-3.900 0.100l-0.100-1.600l3-0.200l2.900-6.100l-1.700 0.600l-1.300 2.500l-1.400-0.700z"/></g></svg>
<span class="t" style="left:1498.90px;top:1043.45px;font:11.5px/11.5px 'Liberation Sans', sans-serif;letter-spacing:-0.445px;color:#0c0c0c;">ISolvables</span>
<svg style="left:1564px;top:1042px" width="14" height="14" viewBox="0 0 14 14"><circle cx="7" cy="7" r="6.300" fill="#db5860"/><rect x="6" y="3" width="2" height="5" fill="#fff"/><rect x="6" y="9.200" width="2" height="2" fill="#fff"/></svg>
<div style="left:1583px;top:1036px;width:32px;height:26px;background:#b5b5b5;"></div>
<div style="left:1615px;top:1036px;width:11px;height:26px;background:#dadada;"></div>
<span class="t" style="left:1587.10px;top:1042.20px;font:14px/14px 'Liberation Sans', sans-serif;letter-spacing:0.313px;color:#0c0c0c;">2547 of 8192M</span>
</body></html>
